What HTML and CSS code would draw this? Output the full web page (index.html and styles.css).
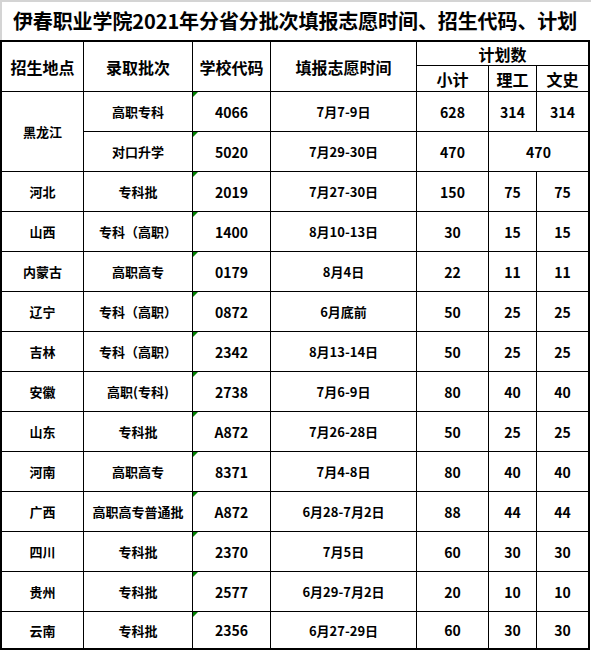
FILE: index.html
```html
<!DOCTYPE html>
<html lang="zh-CN">
<head>
<meta charset="utf-8">
<title>伊春职业学院2021年分省分批次填报志愿时间、招生代码、计划</title>
<link rel="stylesheet" href="styles.css">
</head>
<body>
<div class="title">伊春职业学院2021年分省分批次填报志愿时间、招生代码、计划</div>
<div class="sheet">
  <div class="c h rs2">招生地点</div>
  <div class="c h rs2">录取批次</div>
  <div class="c h rs2">学校代码</div>
  <div class="c h rs2">填报志愿时间</div>
  <div class="c h cs3">计划数</div>
  <div class="c h">小计</div>
  <div class="c h">理工</div>
  <div class="c h">文史</div>

  <div class="c rs2">黑龙江</div>
  <div class="c">高职专科</div>
  <div class="c n code">4066</div>
  <div class="c">7月7-9日</div>
  <div class="c n">628</div>
  <div class="c n">314</div>
  <div class="c n">314</div>
  <div class="c">对口升学</div>
  <div class="c n code">5020</div>
  <div class="c">7月29-30日</div>
  <div class="c n">470</div>
  <div class="c n cs2">470</div>

  <div class="c">河北</div><div class="c">专科批</div><div class="c n code">2019</div><div class="c">7月27-30日</div><div class="c n">150</div><div class="c n">75</div><div class="c n">75</div>
  <div class="c">山西</div><div class="c">专科（高职）</div><div class="c n code">1400</div><div class="c">8月10-13日</div><div class="c n">30</div><div class="c n">15</div><div class="c n">15</div>
  <div class="c">内蒙古</div><div class="c">高职高专</div><div class="c n code">0179</div><div class="c">8月4日</div><div class="c n">22</div><div class="c n">11</div><div class="c n">11</div>
  <div class="c">辽宁</div><div class="c">专科（高职）</div><div class="c n code">0872</div><div class="c">6月底前</div><div class="c n">50</div><div class="c n">25</div><div class="c n">25</div>
  <div class="c">吉林</div><div class="c">专科（高职）</div><div class="c n code">2342</div><div class="c">8月13-14日</div><div class="c n">50</div><div class="c n">25</div><div class="c n">25</div>
  <div class="c">安徽</div><div class="c">高职(专科)</div><div class="c n code">2738</div><div class="c">7月6-9日</div><div class="c n">80</div><div class="c n">40</div><div class="c n">40</div>
  <div class="c">山东</div><div class="c">专科批</div><div class="c n code">A872</div><div class="c">7月26-28日</div><div class="c n">50</div><div class="c n">25</div><div class="c n">25</div>
  <div class="c">河南</div><div class="c">高职高专</div><div class="c n code">8371</div><div class="c">7月4-8日</div><div class="c n">80</div><div class="c n">40</div><div class="c n">40</div>
  <div class="c">广西</div><div class="c">高职高专普通批</div><div class="c n code">A872</div><div class="c">6月28-7月2日</div><div class="c n">88</div><div class="c n">44</div><div class="c n">44</div>
  <div class="c">四川</div><div class="c">专科批</div><div class="c n code">2370</div><div class="c">7月5日</div><div class="c n">60</div><div class="c n">30</div><div class="c n">30</div>
  <div class="c">贵州</div><div class="c">专科批</div><div class="c n code">2577</div><div class="c">6月29-7月2日</div><div class="c n">20</div><div class="c n">10</div><div class="c n">10</div>
  <div class="c">云南</div><div class="c">专科批</div><div class="c n code">2356</div><div class="c">6月27-29日</div><div class="c n">60</div><div class="c n">30</div><div class="c n">30</div>
</div>
</body>
</html>
```
FILE: styles.css
```css
html, body {
  margin: 0;
  padding: 0;
  background: #fff;
}
body {
  font-family: "Noto Sans CJK SC", "Noto Sans", sans-serif;
  color: #000;
}
.title {
  box-sizing: border-box;
  width: 591px;
  height: 40px;
  border-top: 2px solid #d4d4d4;
  border-left: 2px solid #d4d4d4;
  display: flex;
  align-items: center;
  justify-content: center;
  padding-right: 3px;
  font-size: 20px;
  font-weight: 700;
  line-height: 1;
  white-space: nowrap;
  letter-spacing: -0.1px;
}
.sheet {
  display: grid;
  width: fit-content;
  grid-template-columns: 81px 108px 77px 145px 71px 47px 51px;
  grid-template-rows: 23px 25px repeat(13, 39px) 36px;
  gap: 1px;
  background: #000;
  border: 2px solid #000;
}
.c {
  position: relative;
  background: #fff;
  display: flex;
  align-items: center;
  justify-content: center;
  font-size: 13px;
  font-weight: 700;
  line-height: 1;
  white-space: nowrap;
}
.n {
  font-size: 14px;
}
.h {
  font-size: 16px;
}
.rs2 { grid-row: span 2; }
.cs2 { grid-column: span 2; }
.cs3 { grid-column: span 3; }
.code::before {
  content: "";
  position: absolute;
  top: 0;
  left: 0;
  border-top: 5px solid #008000;
  border-right: 5px solid transparent;
}
```
